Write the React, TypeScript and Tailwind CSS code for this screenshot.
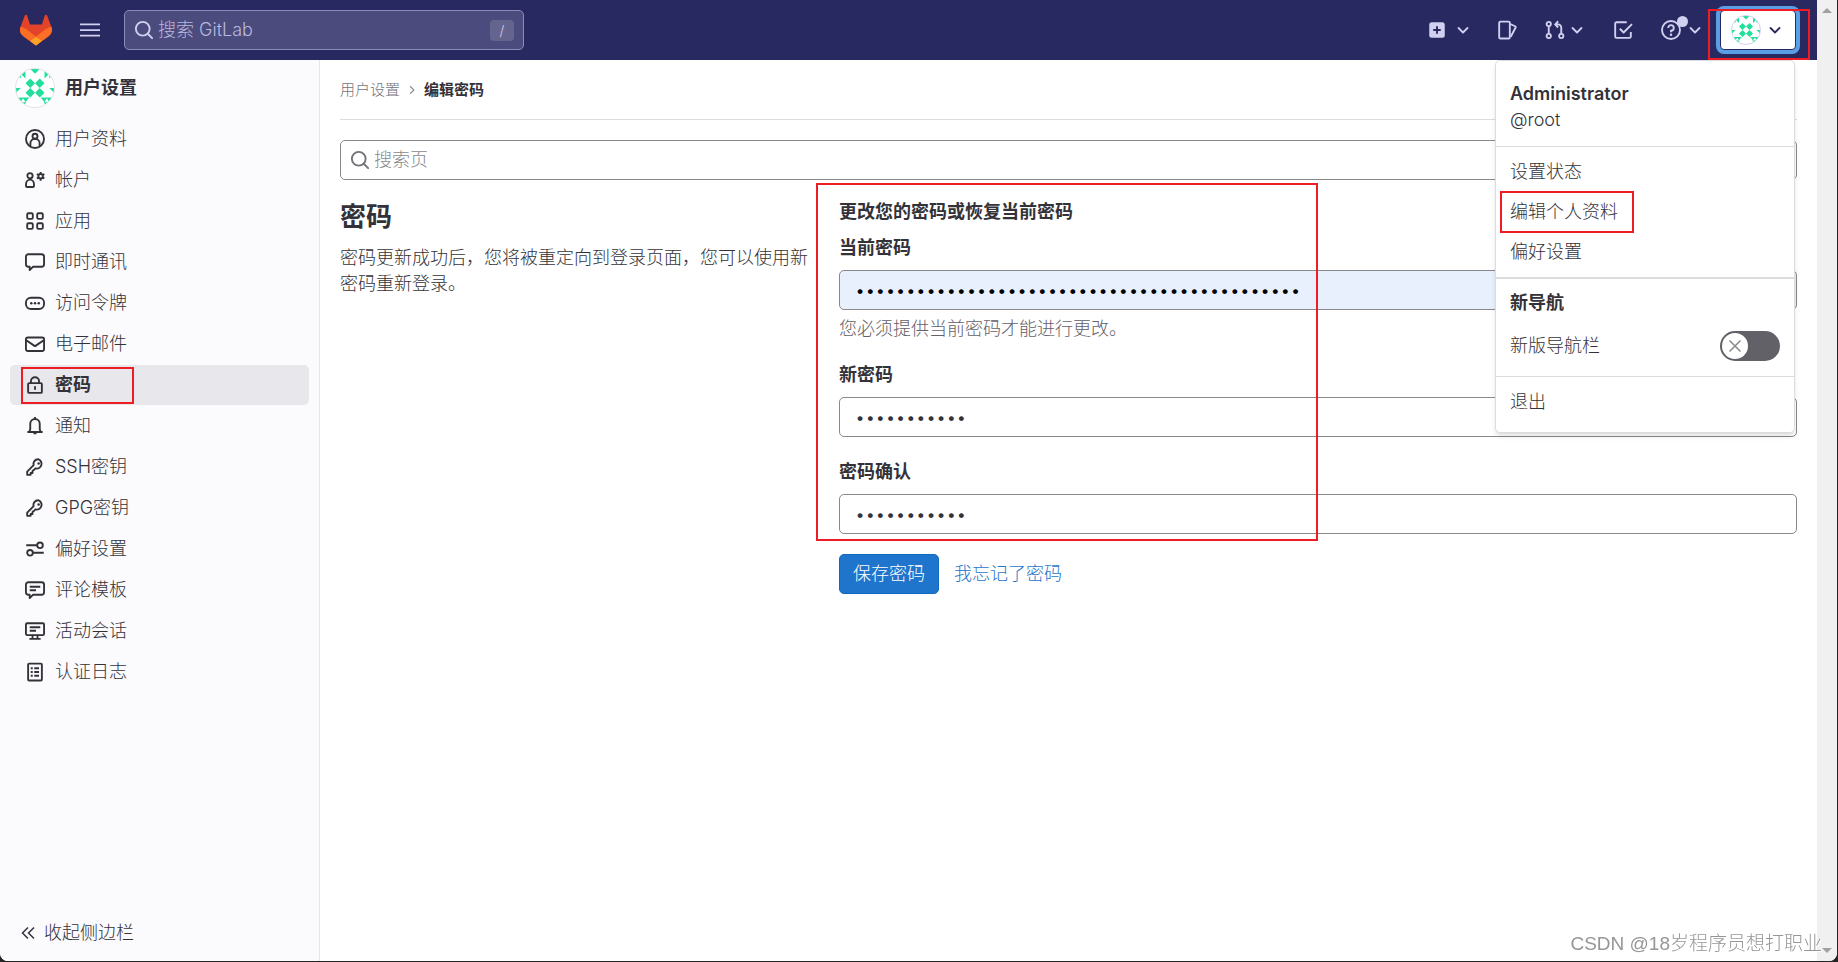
import React from "react";

const Icon: React.FC<{ className?: string; children: React.ReactNode }> = ({
  className = "w-5 h-5",
  children,
}) => (
  <svg
    viewBox="0 0 16 16"
    fill="none"
    stroke="currentColor"
    strokeWidth="1.5"
    className={`shrink-0 ${className}`}
    aria-hidden="true"
  >
    {children}
  </svg>
);

const keyIcon = (
  <>
    <path d="M10.5 1.75a3.75 3.75 0 0 0-3.6 4.8L1.75 11.7v2.55H4.5v-1.5H6v-1.6l1.5-1.2.9-.9a3.75 3.75 0 1 0 2.1-7.3Z" strokeLinejoin="round" />
    <circle cx="10.9" cy="5.1" r="1" fill="currentColor" stroke="none" />
  </>
);

const menuItems = [
  {
    label: "用户资料",
    icon: (
      <>
        <circle cx="8" cy="8" r="7.2" />
        <circle cx="8" cy="5.8" r="2" />
        <path d="M4.3 13.6V11.5a3.7 3.7 0 0 1 7.4 0v2.1" />
      </>
    ),
  },
  {
    label: "帐户",
    icon: (
      <>
        <circle cx="4" cy="4.6" r="2.1" />
        <path d="M.8 11.6a3.2 3.9 0 0 1 6.4 0v1.1a.9.9 0 0 1-.9.9H1.7a.9.9 0 0 1-.9-.9Z" />
        <circle cx="12.5" cy="5" r="1.8" />
        <path d="M12.5 1.5V3M12.5 7v1.500M9.5 3.250l1.3.75M14.2 6l1.3.75M9.5 6.750l1.3-.75M14.2 4l1.3-.75" />
      </>
    ),
  },
  {
    label: "应用",
    icon: (
      <>
        <rect x="1.75" y="1.75" width="4.5" height="4.5" rx="1" />
        <rect x="9.75" y="1.75" width="4.5" height="4.5" rx="1" />
        <rect x="1.75" y="9.75" width="4.5" height="4.5" rx="1" />
        <rect x="9.75" y="9.75" width="4.5" height="4.5" rx="1" />
      </>
    ),
  },
  {
    label: "即时通讯",
    icon: (
      <path d="M2.75 1.75h10.5a2 2 0 0 1 2 2v6a2 2 0 0 1-2 2H6.5L3.75 14.5v-2.75h-1a2 2 0 0 1-2-2v-6a2 2 0 0 1 2-2Z" strokeLinejoin="round" />
    ),
  },
  {
    label: "访问令牌",
    icon: (
      <>
        <rect x=".75" y="3.75" width="14.5" height="9" rx="4" />
        <g fill="currentColor" stroke="none">
          <circle cx="5" cy="8.2" r="1" />
          <circle cx="8" cy="8.2" r="1" />
          <circle cx="11" cy="8.2" r="1" />
        </g>
      </>
    ),
  },
  {
    label: "电子邮件",
    icon: (
      <>
        <rect x=".75" y="2.75" width="14.5" height="10.8" rx="1.5" />
        <path d="M1 5l6.3 4.3a1.2 1.2 0 0 0 1.4 0L15 5" />
      </>
    ),
  },
  {
    label: "密码",
    active: true,
    icon: (
      <>
        <rect x="2.5" y="6.5" width="11" height="7.8" rx=".8" />
        <path d="M4.75 6.5V5a3.25 3.25 0 0 1 6.5 0v1.5M8 9v2.8" />
      </>
    ),
  },
  {
    label: "通知",
    icon: (
      <>
        <path d="M1.9 12.75h12.2M3.5 12.5l.7-1.8V6.2a3.8 3.8 0 0 1 7.6 0v4.5l.7 1.8" />
        <path d="M8 .8v1.5M6.8 13.9h2.4" />
      </>
    ),
  },
  { label: "SSH密钥", icon: keyIcon },
  { label: "GPG密钥", icon: keyIcon },
  {
    label: "偏好设置",
    icon: (
      <>
        <circle cx="12" cy="5" r="2.25" />
        <circle cx="4" cy="11" r="2.25" />
        <path d="M1 5h8.5M6.5 11H15" />
      </>
    ),
  },
  {
    label: "评论模板",
    icon: (
      <>
        <path d="M2.75 1.75h10.5a2 2 0 0 1 2 2v6a2 2 0 0 1-2 2H6.5L3.75 14.5v-2.75h-1a2 2 0 0 1-2-2v-6a2 2 0 0 1 2-2Z" strokeLinejoin="round" />
        <path d="M3.8 5.4h8.4M3.8 8.2h5" />
      </>
    ),
  },
  {
    label: "活动会话",
    icon: (
      <>
        <rect x=".75" y="1.75" width="14.5" height="9.5" rx="1" />
        <path d="M3.8 5h8.4M3.8 7.8h5M6 11v3M10 11v3M3.5 14.25h9" />
      </>
    ),
  },
  {
    label: "认证日志",
    icon: (
      <>
        <rect x="2.5" y="1.25" width="11" height="13.5" rx=".8" />
        <path d="M4.6 5h1.6M7.4 5h3.8M4.6 8h1.6M7.4 8h3.8M4.6 11h1.6M7.4 11h3.8" />
      </>
    ),
  },
];

const Logo = () => (
  <svg viewBox="0 0 25 24" className="w-8 h-8" aria-hidden="true">
    <path
      d="m24.507 9.5-.034-.09L21.082.562a.896.896 0 0 0-1.694.091l-2.29 7.01H7.825L5.535.653a.898.898 0 0 0-1.694-.09L.451 9.411.416 9.5a6.297 6.297 0 0 0 2.09 7.278l.012.01.03.022 5.16 3.867 2.56 1.935 1.554 1.176a1.051 1.051 0 0 0 1.268 0l1.555-1.176 2.56-1.935 5.197-3.89.014-.01A6.297 6.297 0 0 0 24.507 9.5Z"
      fill="#E24329"
    />
    <path
      d="m24.507 9.5-.034-.09a11.44 11.44 0 0 0-4.56 2.051l-7.447 5.632 4.742 3.584 5.197-3.89.014-.01A6.297 6.297 0 0 0 24.507 9.5Z"
      fill="#FC6D26"
    />
    <path
      d="m7.707 20.677 2.56 1.935 1.555 1.176a1.051 1.051 0 0 0 1.268 0l1.555-1.176 2.56-1.935-4.743-3.584-4.755 3.584Z"
      fill="#FCA326"
    />
    <path
      d="M5.01 11.461a11.43 11.43 0 0 0-4.56-2.05L.416 9.5a6.297 6.297 0 0 0 2.09 7.278l.012.01.03.022 5.16 3.867 4.745-3.584-7.444-5.632Z"
      fill="#FC6D26"
    />
  </svg>
);

const Identicon: React.FC<{ className: string }> = ({ className }) => (
  <svg
    viewBox="0 0 40 40"
    className={`rounded-full bg-white border shrink-0 ${className}`}
    aria-hidden="true"
  >
    <g fill="#22e09c">
      <path d="M15 10l5 5-5 5-5-5ZM25 10l5 5-5 5-5-5ZM15 20l5 5-5 5-5-5ZM25 20l5 5-5 5-5-5Z" />
      <path d="M15 0h10l-5 5ZM0 20h5l-5 5ZM40 20h-5l5 5Z" />
      <path d="M5 0h5v5ZM5 5h5v5ZM10 0v10l-3-5ZM0 5h5v5ZM35 0h-5v5ZM35 5h-5v5ZM30 0v10l3-5ZM40 5h-5v5Z" />
      <path d="M2 30h6l-3 5ZM7 30h7l-4 5ZM5 35h6l-3 4ZM38 30h-6l3 5ZM33 30h-7l4 5ZM35 35h-6l3 4Z" />
    </g>
  </svg>
);

const Chevron = () => (
  <Icon className="w-4 h-4">
    <path d="M3.5 6L8 10.5 12.5 6" strokeLinecap="round" strokeLinejoin="round" strokeWidth="1.8" />
  </Icon>
);

const SearchIcon = () => (
  <Icon className="w-5 h-5">
    <circle cx="7" cy="7" r="5.5" />
    <path d="M11 11l3.500 3.500" strokeLinecap="round" />
  </Icon>
);

const fields = [
  {
    id: "current",
    label: "当前密码",
    length: 44,
    hint: "您必须提供当前密码才能进行更改。",
    style: "bg-[#e8f0fe] text-black",
    gap: "mt-[10px]",
  },
  { id: "new", label: "新密码", length: 11, style: "bg-white", gap: "mt-5" },
  { id: "confirm", label: "密码确认", length: 11, style: "bg-white", gap: "mt-[22px]" },
];

const TopBar = () => (
  <header className="relative z-10 h-[60px] shrink-0 bg-[#292961] text-[#d1d0f0] flex items-center px-5">
    <a href="#" aria-label="GitLab">
      <Logo />
    </a>
    <button className="ml-7 w-5 h-5" aria-label="菜单">
      <Icon>
        <path d="M0 3.5h16M0 8h16M0 12.5h16" strokeWidth="1.4" />
      </Icon>
    </button>
    <div className="ml-6 w-[400px] h-10 flex items-center gap-1 px-[9px] rounded-[5px] border border-[#8a8ab8] bg-[#4b4b7e]">
      <SearchIcon />
      <input
        aria-label="搜索 GitLab"
        placeholder="搜索 GitLab"
        className="flex-1 min-w-0 bg-transparent outline-none placeholder:text-[#b9b8de]"
      />
      <kbd className="w-6 h-[21px] rounded-sm bg-[#64648f] text-sm leading-[21px] text-center font-[inherit]">
        /
      </kbd>
    </div>

    <nav className="ml-auto flex items-center">
      <button className="flex items-center gap-2" aria-label="新建">
        <Icon>
          <rect x="1.8" y="1.8" width="12.4" height="12.4" rx="2" fill="currentColor" stroke="none" />
          <path d="M8 5v6M5 8h6" stroke="#292961" />
        </Icon>
        <Chevron />
      </button>
      <button className="ml-[26px]" aria-label="议题">
        <Icon>
          <rect x="1.75" y="1.25" width="8.5" height="13.5" rx="1" />
          <path d="M10.5 3.2l4 1.8a.8.8 0 0 1 .4 1L11 13.4" strokeLinejoin="round" />
        </Icon>
      </button>
      <button className="ml-7 flex items-center gap-1" aria-label="合并请求">
        <Icon>
          <circle cx="3" cy="3.2" r="1.7" />
          <circle cx="3" cy="12.8" r="1.7" />
          <circle cx="13" cy="12.8" r="1.7" />
          <path d="M3 5v6M13 11V6a2.5 2.5 0 0 0-2.5-2.5H8.5M10.5 1L8.2 3.5l2.3 2.5" />
        </Icon>
        <Chevron />
      </button>
      <button className="ml-7" aria-label="待办事项">
        <Icon>
          <path d="M11 1.75H2.75a1 1 0 0 0-1 1v10.5a1 1 0 0 0 1 1h10.5a1 1 0 0 0 1-1V9.5M5.5 7l3 3 6.7-6.7" strokeLinejoin="round" />
        </Icon>
      </button>
      <button className="relative ml-7 flex items-center gap-[6px]" aria-label="帮助">
        <Icon>
          <circle cx="8" cy="8" r="7.2" />
          <path d="M5.8 6.3A2.2 2.2 0 1 1 8 8.500v1.2" />
          <circle cx="8" cy="11.8" r="1" fill="currentColor" stroke="none" />
        </Icon>
        <Chevron />
        <span className="absolute -top-1 left-4 w-[11px] h-[11px] rounded-full bg-[#d1d0f0]" />
      </button>
      <div className="relative ml-[17px] mr-px">
        <button
          className="w-[76px] h-10 pr-0.5 flex items-center justify-center gap-[6px] rounded-[4px] bg-white text-[#292961] ring-4 ring-[#5a9ee5] border border-[#292961]"
          aria-label="用户菜单"
        >
          <Identicon className="w-[30px] h-[30px] border-[#d1d0f0]" />
          <Chevron />
        </button>
        <span className="absolute -top-px -left-3 w-[102px] h-[51px] border-2 border-[#ee1c25] pointer-events-none" />
      </div>
    </nav>

    <UserMenu />
  </header>
);

const UserMenu = () => (
  <div className="absolute top-full right-[22px] w-[300px] rounded-[5px] border border-[#dcdcde] bg-white text-[#333238] shadow-md">
    <div className="px-[14px] pt-5 pb-[13px]">
      <p className="font-semibold leading-[26px]">Administrator</p>
      <p className="leading-[26px]">@root</p>
    </div>
    <ul className="border-t border-[#dcdcde] py-[5px]">
      <li className="h-10 px-[14px] flex items-center">
        <a href="#">设置状态</a>
      </li>
      <li className="relative h-10 px-[14px] flex items-center">
        <a href="#">编辑个人资料</a>
        <span className="absolute -top-px left-1 w-[134px] h-[42px] border-2 border-[#ee1c25] pointer-events-none" />
      </li>
      <li className="h-10 px-[14px] flex items-center">
        <a href="#">偏好设置</a>
      </li>
    </ul>
    <div className="border-t-2 border-[#dcdcde] px-[14px] pt-[11px] pb-[10px]">
      <p className="font-bold leading-[26px]">新导航</p>
      <div className="mt-[10px] h-10 flex items-center justify-between">
        <span id="new-nav">新版导航栏</span>
        <button
          role="switch"
          aria-checked="false"
          aria-labelledby="new-nav"
          className="w-[60px] h-[30px] rounded-full bg-[#626168] p-0.5 flex"
        >
          <span className="w-[26px] h-[26px] rounded-full bg-white text-[#89888d] flex items-center justify-center">
            <Icon className="w-4 h-4">
              <path d="M2.5 2.5l11 11M13.5 2.5l-11 11" />
            </Icon>
          </span>
        </button>
      </div>
    </div>
    <div className="border-t border-[#dcdcde] px-[14px] pt-[5px] pb-[10px]">
      <a href="#" className="h-10 flex items-center">
        退出
      </a>
    </div>
  </div>
);

const Sidebar = () => (
  <aside className="w-80 shrink-0 flex flex-col bg-[#fbfafd] border-r border-[#e6e5ea] px-[10px]">
    <a href="#" className="mt-2 pl-[5px] flex items-center gap-[10px] font-bold">
      <Identicon className="w-10 h-10 border-[#e3e3e8]" />
      用户设置
    </a>
    <ul className="mt-[11px] flex flex-col gap-px">
      {menuItems.map((item) => (
        <li key={item.label} className="relative">
          <a
            href="#"
            className={`h-10 pl-[15px] flex items-center gap-[10px] rounded-[5px] ${
              item.active ? "bg-[#e8e7ec] font-bold" : ""
            }`}
          >
            <Icon>{item.icon}</Icon>
            {item.label}
          </a>
          {item.active && (
            <span className="absolute top-0.5 left-[11px] w-[113px] h-[37px] border-2 border-[#ee1c25] pointer-events-none" />
          )}
        </li>
      ))}
    </ul>
    <button className="mt-auto mb-2 h-10 pl-[10px] flex items-center gap-2">
      <Icon className="w-4 h-4">
        <path d="M8 2.5L2.5 8 8 13.5M14 2.5L8.5 8l5.5 5.5" />
      </Icon>
      收起侧边栏
    </button>
  </aside>
);

const PasswordForm = () => (
  <form className="relative flex-[2] min-w-0 pl-5">
    <h4 className="mt-[5px] font-bold leading-[26px]">更改您的密码或恢复当前密码</h4>
    {fields.map((field) => (
      <div key={field.id} className={field.gap}>
        <label htmlFor={field.id} className="block font-bold leading-[26px]">
          {field.label}
        </label>
        <input
          id={field.id}
          type="password"
          defaultValue={"x".repeat(field.length)}
          className={`mt-[9px] w-full h-10 px-[15px] rounded-[5px] border border-[#89888d] outline-none ${field.style}`}
        />
        {field.hint && (
          <p className="mt-[6px] leading-[26px] text-[#626168]">{field.hint}</p>
        )}
      </div>
    ))}
    <div className="mt-5 flex items-center gap-[15px]">
      <button
        type="button"
        className="h-10 w-[100px] rounded-[5px] bg-[#1f75cb] border border-[#1068bf] text-white"
      >
        保存密码
      </button>
      <a href="#" className="text-[#1f75cb]">
        我忘记了密码
      </a>
    </div>
    <span className="absolute -top-[11px] -left-[3px] w-[502px] h-[358px] border-2 border-[#ee1c25] pointer-events-none" />
  </form>
);

const App: React.FC = () => {
  return (
    <div className="min-h-screen flex bg-[#252525] pr-px pb-px text-lg font-light text-[#333238] font-['Inter','Noto_Sans_CJK_SC',sans-serif]">
      <div className="flex-1 flex rounded-b-lg overflow-hidden bg-white">
        <div className="flex-1 min-w-0 flex flex-col">
          <TopBar />
          <div className="flex-1 flex">
            <Sidebar />
            <main className="flex-1 min-w-0 px-5">
              <nav className="h-[60px] flex items-center border-b border-[#dcdcde] text-[15px]">
                <a href="#" className="text-[#737278]">
                  用户设置
                </a>
                <Icon className="w-3 h-3 mx-[6px] text-[#89888d]">
                  <path d="M5.5 3l5 5-5 5" />
                </Icon>
                <a href="#" className="font-bold">
                  编辑密码
                </a>
              </nav>

              <div className="mt-5 h-10 flex items-center gap-1 px-[9px] rounded-[5px] border border-[#89888d] text-[#737278]">
                <SearchIcon />
                <input
                  aria-label="搜索页"
                  placeholder="搜索页"
                  className="flex-1 min-w-0 bg-transparent outline-none placeholder:text-[#89888d]"
                />
              </div>

              <section className="mt-[14px] flex">
                <div className="flex-1 min-w-0">
                  <h3 className="mt-[5px] text-[26px] leading-9 font-bold">密码</h3>
                  <p className="mt-[10px] leading-[26px]">
                    密码更新成功后，您将被重定向到登录页面，您可以使用新密码重新登录。
                  </p>
                </div>
                <PasswordForm />
              </section>
            </main>
          </div>
        </div>

        {/* window scrollbar */}
        <div className="w-5 shrink-0 bg-[#f0f0f0] flex flex-col items-center justify-between py-2 text-[#a0a0a0]">
          <svg viewBox="0 0 10 5" className="w-[10px] h-[5px]" fill="currentColor">
            <path d="M0 5L5 0l5 5Z" />
          </svg>
          <svg viewBox="0 0 10 5" className="w-[10px] h-[5px]" fill="currentColor">
            <path d="M0 0h10L5 5Z" />
          </svg>
        </div>
      </div>

      <p className="fixed bottom-1 right-4 z-20 text-[19px] leading-7 text-[#969696] [text-shadow:1px_1px_0_#ffffff] font-['Liberation_Sans','Noto_Sans_CJK_SC',sans-serif]">
        CSDN @18岁程序员想打职业
      </p>
    </div>
  );
};

export default App;
